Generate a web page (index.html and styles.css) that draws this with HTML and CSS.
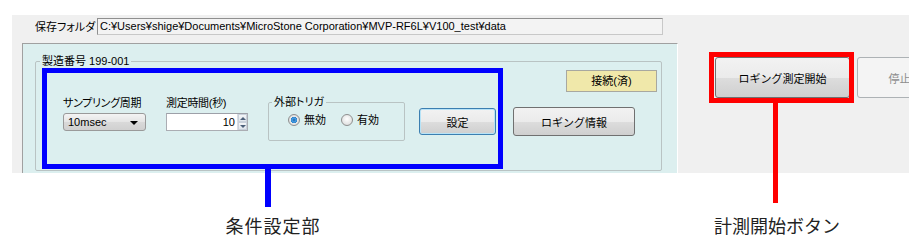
FILE: index.html
```html
<!DOCTYPE html>
<html lang="ja">
<head>
<meta charset="UTF-8" />
<title>ロギング設定</title>
<link rel="stylesheet" href="styles.css">
</head>
<body>
  <div class="window">
    <div class="path-row">
      <span class="path-label">保存フォルダ</span>
      <div class="path-field">C:¥Users¥shige¥Documents¥MicroStone Corporation¥MVP-RF6L¥V100_test¥data</div>
    </div>

    <div class="main-row">
      <div class="panel">
        <fieldset class="serial-group">
          <legend>製造番号 199-001</legend>
          <div class="status-row">
            <span class="status">接続(済)</span>
          </div>
          <div class="controls">
            <div class="field field-sampling">
              <label>サンプリング周期</label>
              <div class="select">10msec<span class="caret"></span></div>
            </div>
            <div class="field field-duration">
              <label>測定時間(秒)</label>
              <div class="spin">
                <span class="spin-value">10</span>
                <span class="spin-buttons">
                  <span class="spin-up"></span>
                  <span class="spin-down"></span>
                </span>
              </div>
            </div>
            <fieldset class="trigger-group">
              <legend>外部トリガ</legend>
              <div class="radios">
                <span class="radio checked"></span><span class="radio-text">無効</span>
                <span class="radio"></span><span class="radio-text">有効</span>
              </div>
            </fieldset>
            <button class="btn btn-default btn-set">設定</button>
            <button class="btn btn-info">ロギング情報</button>
          </div>
        </fieldset>
      </div>

      <div class="actions">
        <button class="btn btn-start">ロギング測定開始</button>
        <button class="btn btn-stop" disabled>停止</button>
      </div>
    </div>
  </div>

  <!-- annotations -->
  <div class="callout-box callout-blue-box"></div>
  <div class="callout-line callout-blue-line"></div>
  <div class="callout-label callout-blue-label">条件設定部</div>

  <div class="callout-box callout-red-box"></div>
  <div class="callout-line callout-red-line"></div>
  <div class="callout-label callout-red-label">計測開始ボタン</div>
</body>
</html>
```

FILE: styles.css
```css
/* Base */
* {
  box-sizing: border-box;
}
body {
  margin: 0;
  width: 920px;
  height: 250px;
  background: #fff;
  position: relative;
  overflow: hidden;
  font-family: "Liberation Sans", "Noto Sans CJK JP", sans-serif;
  font-size: 11px;
  color: #000;
  font-feature-settings: "palt";
}

/* Window area */
.window {
  margin: 15px 0 0 12px;
  width: 897px;
  height: 158px;
  background: #f0f0f0;
  overflow: hidden;
}
.path-row {
  display: flex;
  align-items: center;
  padding: 3px 0 0 23px;
}
.path-label {
  width: 62px;
  line-height: 16px;
}
.path-field {
  width: 566px;
  height: 17px;
  line-height: 15px;
  padding: 0 2px;
  border: 1px solid #8f8f8f;
  border-right-color: #c8c8c8;
  border-bottom-color: #c8c8c8;
  background: #f3f3f3;
  white-space: nowrap;
  overflow: hidden;
}

.main-row {
  display: flex;
  margin-top: 8px;
}

/* Teal panel */
.panel {
  flex: none;
  margin-left: 10px;
  width: 656px;
  height: 131px;
  background: #dcefef;
  border-top: 1px solid #a0a0a0;
  border-left: 1px solid #a0a0a0;
  border-right: 1px solid #fff;
  padding: 11px 0 0 12px;
}
fieldset {
  margin: 0;
  border: 1px solid #b9c3c3;
  border-radius: 2px;
}
legend {
  padding: 0 2px;
  line-height: 12px;
}
.serial-group {
  width: 627px;
  height: 116px;
  padding: 3px 4px 0 4px;
}
.status-row {
  display: flex;
  justify-content: flex-end;
}
.status {
  width: 91px;
  height: 22px;
  line-height: 20px;
  text-align: center;
  background: #f0e8aa;
  border: 1px solid #a8a8a0;
}

.controls {
  display: flex;
  align-items: flex-start;
  margin-top: 4px;
  padding-left: 23px;
}
.field label {
  display: block;
  line-height: 14px;
  letter-spacing: -0.3px;
}
.field-sampling {
  width: 83px;
}
.field-duration {
  width: 82px;
  margin-left: 20px;
}
.select {
  margin-top: 3px;
  height: 18px;
  line-height: 16px;
  padding: 0 4px;
  position: relative;
  border: 1px solid #9a9a9a;
  border-radius: 3px;
  background: linear-gradient(#f4f4f4, #e4e4e4 50%, #d9d9d9 51%, #d0d0d0);
}
.caret {
  position: absolute;
  right: 7px;
  top: 7px;
  border-left: 4px solid transparent;
  border-right: 4px solid transparent;
  border-top: 4px solid #000;
}
.spin {
  margin-top: 3px;
  height: 18px;
  display: flex;
  border: 1px solid #abadb3;
  border-top-color: #9da0a8;
  background: #fff;
}
.spin-value {
  flex: 1;
  text-align: right;
  line-height: 16px;
  padding-right: 2px;
}
.spin-buttons {
  width: 10px;
  display: flex;
  flex-direction: column;
  border-left: 1px solid #d8dde4;
}
.spin-up,
.spin-down {
  flex: 1;
  display: flex;
  align-items: center;
  justify-content: center;
  background: linear-gradient(#f4f6f8, #dfe5ec);
  border: 1px solid #c9d1db;
}
.spin-up::after {
  content: "";
  border-left: 3px solid transparent;
  border-right: 3px solid transparent;
  border-bottom: 3px solid #4c607a;
}
.spin-down::after {
  content: "";
  border-left: 3px solid transparent;
  border-right: 3px solid transparent;
  border-top: 3px solid #4c607a;
}

/* External trigger */
.trigger-group {
  margin-left: 20px;
  width: 137px;
  height: 45px;
  padding: 0 3px;
}
.radios {
  display: flex;
  align-items: center;
  margin-top: 5px;
  padding-left: 16px;
  line-height: 14px;
}
.radio {
  width: 12px;
  height: 12px;
  border-radius: 50%;
  border: 1px solid #8e8f8f;
  background: radial-gradient(circle at 50% 40%, #fff, #e2e2e2 70%, #cfcfcf);
}
.radio.checked {
  background: radial-gradient(circle, #1d5fa8 0, #4aa3e6 2px, #2b7fc8 3px, #e8e8e8 3.5px, #d2d2d2);
}
.radio-text {
  margin: 0 15px 0 4px;
}

/* Buttons */
.btn {
  font-family: inherit;
  font-size: 11px;
  color: #000;
  padding: 0;
  border: 1px solid #707070;
  border-radius: 3px;
  background: linear-gradient(#f2f2f2, #ebebeb 50%, #dddddd 51%, #cfcfcf);
}
.btn-default {
  border-color: #3c7fb1;
  box-shadow: inset 0 0 0 1px #b7e3f7;
}
.btn-set {
  margin: 12px 0 0 14px;
  width: 77px;
  height: 27px;
}
.btn-info {
  margin: 11px 0 0 17px;
  width: 122px;
  height: 29px;
}

.actions {
  flex: none;
  display: flex;
  gap: 7px;
  margin: 14px 0 0 37px;
}
.btn-start {
  width: 135px;
  height: 41px;
}
.btn-stop {
  width: 85px;
  height: 41px;
  color: #8d8d8d;
  border-color: #adb2b5;
  background: #f4f4f4;
}

/* Annotation overlays */
.callout-box {
  position: absolute;
  border: 5px solid;
}
.callout-line {
  position: absolute;
}
.callout-label {
  position: absolute;
  top: 215px;
  width: 160px;
  text-align: center;
  font-family: "Noto Sans CJK JP", sans-serif;
  font-feature-settings: normal;
  font-size: 18px;
  line-height: 20px;
  color: #222;
}
.callout-blue-box {
  left: 42px;
  top: 68px;
  width: 461px;
  height: 101px;
  border-color: #0000ff;
}
.callout-blue-line {
  left: 265px;
  top: 168px;
  width: 6px;
  height: 39px;
  background: #0000ff;
}
.callout-blue-label {
  left: 193px;
  letter-spacing: 1px;
}
.callout-red-box {
  left: 709px;
  top: 52px;
  width: 145px;
  height: 51px;
  border-color: #ff0000;
}
.callout-red-line {
  left: 773px;
  top: 102px;
  width: 5px;
  height: 101px;
  background: #ff0000;
}
.callout-red-label {
  left: 697px;
}
```
